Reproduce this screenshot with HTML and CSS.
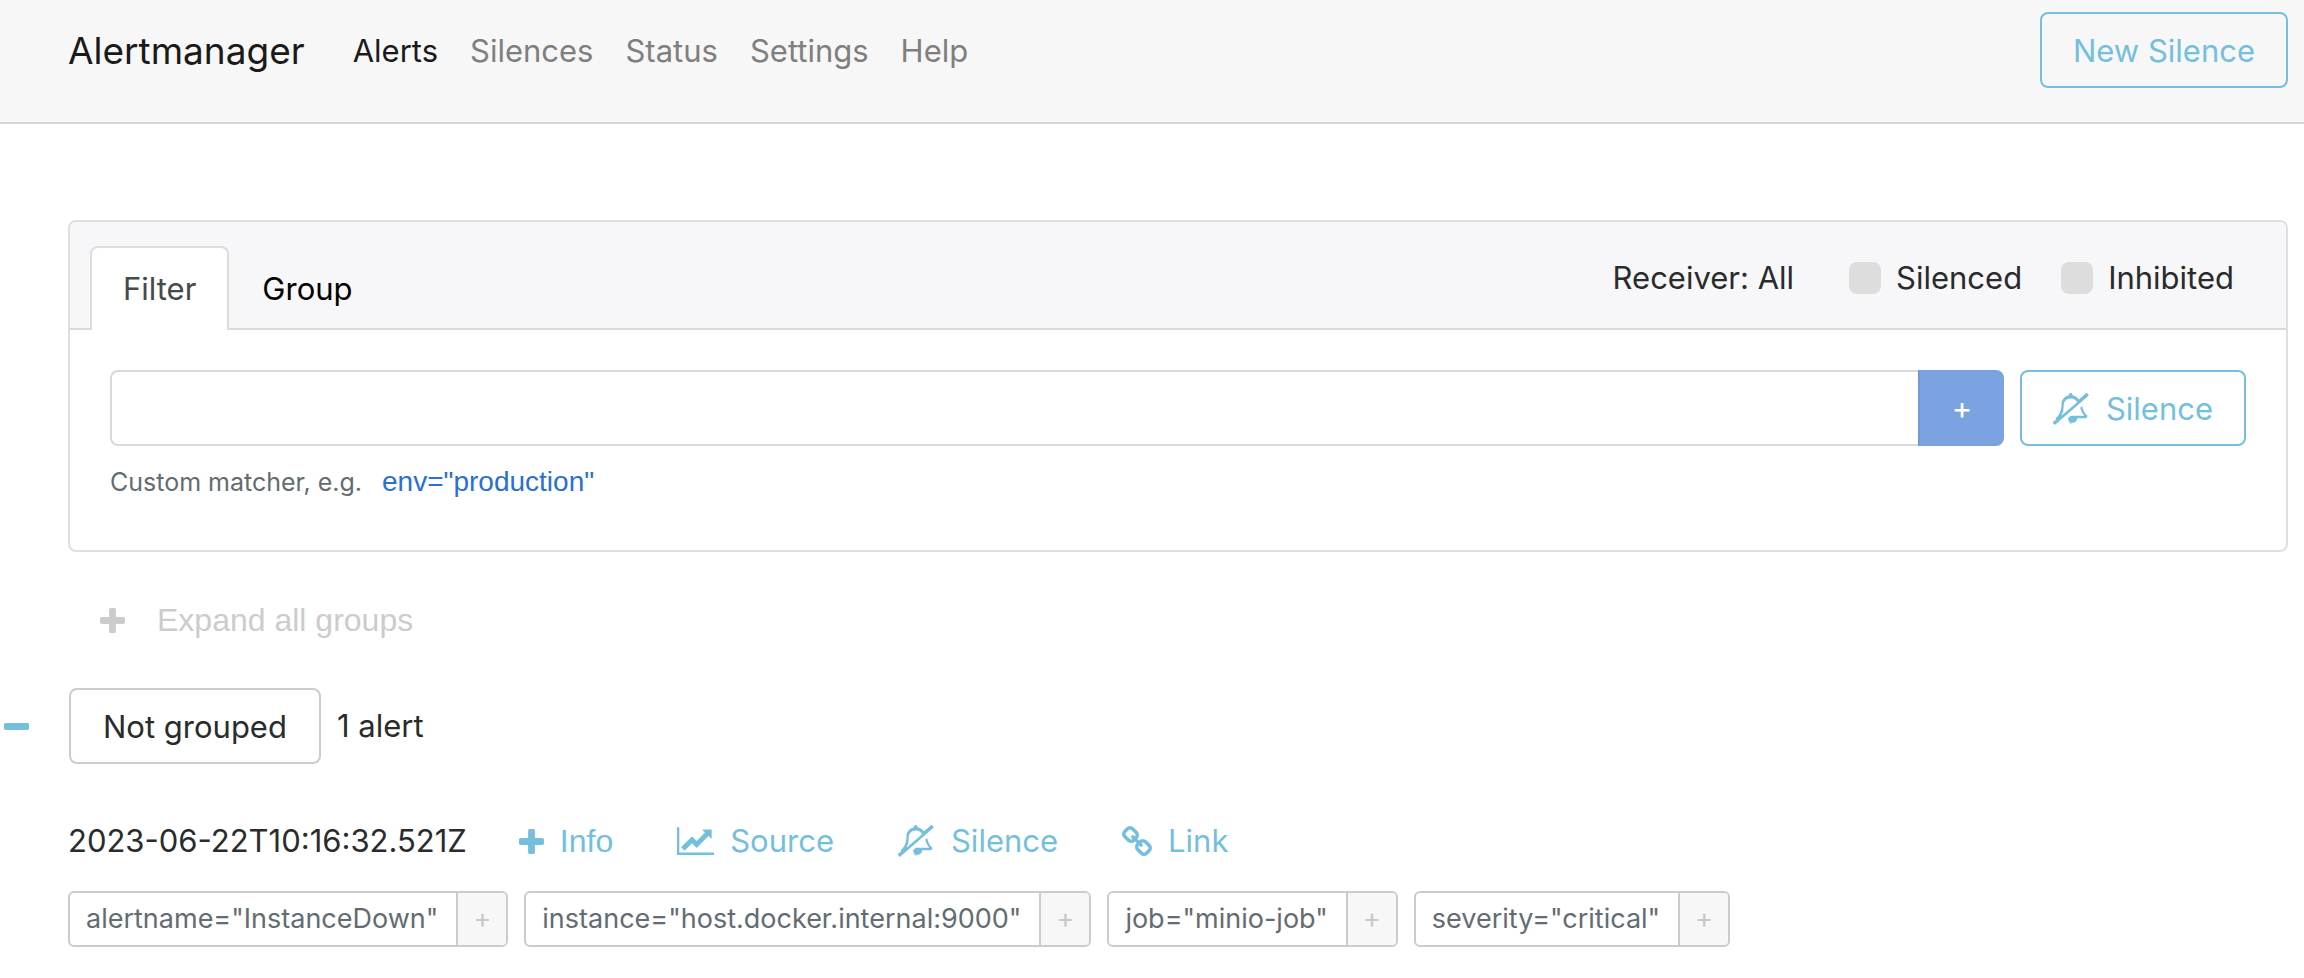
FILE: index.html
```html
<!DOCTYPE html>
<html lang="en">
<head>
<meta charset="utf-8">
<title>Alertmanager</title>
<link rel="stylesheet" href="styles.css">
</head>
<body>
<svg class="sprite" aria-hidden="true">
  <symbol id="i-plus" viewBox="0 0 1408 1408"><path d="M1408 608v192q0 40-28 68t-68 28H896v416q0 40-28 68t-68 28H608q-40 0-68-28t-28-68V896H96q-40 0-68-28T0 800V608q0-40 28-68t68-28h416V96q0-40 28-68t68-28h192q40 0 68 28t28 68v416h416q40 0 68 28t28 68z"/></symbol>
  <symbol id="i-minus" viewBox="0 0 1408 1408"><path d="M1408 608v192q0 40-28 68t-68 28H96q-40 0-68-28T0 800V608q0-40 28-68t68-28h1216q40 0 68 28t28 68z"/></symbol>
  <symbol id="i-chart" viewBox="0 0 2048 1536"><path d="M2048 1408v128H0V0h128v1408h1920zM1920 160v435q0 21-19.500 29.500T1865 617l-121-121-633 633q-10 10-23 10t-23-10l-233-233-416 416-192-192 585-585q10-10 23-10t23 10l233 233 464-464-121-121q-16-16-7.500-35.500T1453 128h435q14 0 23 9t9 23z"/></symbol>
  <symbol id="i-bell" viewBox="0 0 2048 1792"><path d="M1056 1696q0-16-16-16-59 0-101.500-42.500t-42.500-101.500q0-16-16-16t-16 16q0 73 51.500 124.500t124.500 51.500q16 0 16-16zm-595-420l877-760q-42-88-132.500-146.500t-223.500-58.500q-93 0-169.500 31.500t-121.500 80.500-69 103-24 105q0 384-137 645zm1459 4q0 52-38 90t-90 38h-448q0 106-75 181t-181 75-180.500-74.500-75.500-180.500l149-129h757q-166-187-227-459l111-97q61 356 298 556zm-22-1270l84 96q8 10 7.500 23.500t-10.500 22.500l-1872 1622q-10 8-23.500 7t-21.500-11l-84-96q-8-10-7.500-23.500t10.500-21.500l186-161q-19-32-19-66 50-42 91-88t85-119.500 74.500-158.500 50-206 19.500-260q0-152 117-282.500t307-158.500q-8-19-8-39 0-40 28-68t68-28 68 28 28 68q0 20-8 39 124 18 219 82.500t148 157.500l418-363q10-8 23.500-7t21.500 11z"/></symbol>
  <symbol id="i-link" viewBox="80 16 1632 1632"><path d="M1520 1216q0-40-28-68l-208-208q-28-28-68-28-42 0-72 32 3 3 19 18.500t21.500 21.500 15 19 13 25.500 3.500 27.500q0 40-28 68t-68 28q-15 0-27.500-3.500t-25.500-13-19-15-21.500-21.500-18.500-19q-33 31-33 73 0 40 28 68l206 207q27 27 68 27 40 0 68-26l147-146q28-28 28-67zm-703-705q0-40-28-68l-206-207q-28-28-68-28-39 0-68 27l-147 146q-28 28-28 67 0 40 28 68l208 208q27 27 68 27 42 0 72-31-3-3-19-18.500t-21.500-21.500-15-19-13-25.500-3.500-27.500q0-40 28-68t68-28q15 0 27.500 3.500t25.500 13 19 15 21.500 21.500 18.500 19q33-31 33-73zm895 705q0 120-85 203l-147 146q-83 83-203 83-121 0-204-85l-206-207q-83-83-83-203 0-123 88-209l-88-88q-86 88-208 88-120 0-204-84l-208-208q-84-84-84-204t85-203l147-146q83-83 203-83 121 0 204 85l206 207q83 83 83 203 0 123-88 209l88 88q86-88 208-88 120 0 204 84l208 208q84 84 84 204z"/></symbol>
</svg>

<header class="navbar">
  <nav class="nav">
    <a class="brand" href="#">Alertmanager</a>
    <a class="nav-link active" href="#alerts">Alerts</a>
    <a class="nav-link" href="#silences">Silences</a>
    <a class="nav-link" href="#status">Status</a>
    <a class="nav-link" href="#settings">Settings</a>
    <a class="nav-link" href="#help">Help</a>
  </nav>
  <a class="btn btn-info" href="#new">New Silence</a>
</header>

<main class="page">
  <section class="card">
    <div class="card-header">
      <div class="tabs">
        <a class="tab current" href="#filter">Filter</a>
        <a class="tab" href="#group">Group</a>
      </div>
      <div class="options">
        <button class="receiver" type="button">Receiver: All</button>
        <label class="check"><input type="checkbox"><span>Silenced</span></label>
        <label class="check"><input type="checkbox"><span>Inhibited</span></label>
      </div>
    </div>
    <div class="card-body">
      <div class="filter-row">
        <div class="input-group">
          <input class="matcher" type="text" aria-label="Matcher">
          <button class="add" type="button" disabled>+</button>
        </div>
        <a class="btn btn-info" href="#silence"><svg class="icon bell"><use href="#i-bell"/></svg>Silence</a>
      </div>
      <p class="hint">Custom matcher, e.g. <button class="example" type="button">env="production"</button></p>
    </div>
  </section>

  <button class="expand" type="button"><svg class="icon plus"><use href="#i-plus"/></svg>Expand all groups</button>

  <div class="group">
    <button class="collapse" type="button" aria-label="Collapse group"><svg class="icon plus"><use href="#i-minus"/></svg></button>
    <span class="btn btn-plain">Not grouped</span>
    <span>1 alert</span>
  </div>

  <article class="alert">
    <div class="alert-head">
      <time>2023-06-22T10:16:32.521Z</time>
      <button class="action info" type="button"><svg class="icon plus"><use href="#i-plus"/></svg>Info</button>
      <a class="action" href="#source"><svg class="icon chart"><use href="#i-chart"/></svg>Source</a>
      <a class="action" href="#silence"><svg class="icon bell"><use href="#i-bell"/></svg>Silence</a>
      <a class="action" href="#link"><svg class="icon link"><use href="#i-link"/></svg>Link</a>
    </div>
    <div class="labels">
      <div class="chip"><span class="chip-text">alertname="InstanceDown"</span><button class="chip-add" type="button">+</button></div>
      <div class="chip"><span class="chip-text">instance="host.docker.internal:9000"</span><button class="chip-add" type="button">+</button></div>
      <div class="chip"><span class="chip-text">job="minio-job"</span><button class="chip-add" type="button">+</button></div>
      <div class="chip"><span class="chip-text">severity="critical"</span><button class="chip-add" type="button">+</button></div>
    </div>
  </article>
</main>
</body>
</html>
```
FILE: styles.css
```css
* { box-sizing: border-box; }

body {
  margin: 0;
  background: #fff;
  color: #292b2c;
  font-family: Inter, "Liberation Sans", sans-serif;
  font-size: 31px;
  line-height: 48px;
}

a { text-decoration: none; }

button {
  margin: 0;
  padding: 0;
  border: 0;
  background: none;
  color: inherit;
  font: inherit;
}

.sprite { display: none; }

.icon { flex: none; fill: currentColor; }
.plus { width: 25px; height: 25px; }
.bell { width: 37px; height: 32px; }
.chart { width: 37px; height: 28px; }
.link { width: 30px; height: 30px; }

.navbar {
  display: flex;
  align-items: flex-start;
  justify-content: space-between;
  padding: 12px 16px 34px 68px;
  border-bottom: 2px solid #d5d5d5;
  background: #f7f7f7;
}

.nav {
  display: flex;
  align-items: center;
  gap: 32px;
  padding: 15px 0 13px;
}

.brand {
  margin-right: 16px;
  color: #1a1a1a;
  font-size: 37px;
}

.nav-link { color: #7f7f7f; }
.nav-link.active { color: #1a1a1a; }

.btn {
  display: inline-flex;
  align-items: center;
  gap: 16px;
  padding: 13px 32px 11px;
  border: 2px solid;
  border-radius: 8px;
  white-space: nowrap;
}

.btn-info {
  padding-right: 31px;
  padding-left: 31px;
  color: #74bfdd;
}

.btn-plain { border-color: #ccc; }

.page { padding: 96px 16px 32px 68px; }

.card {
  border: 2px solid #dfdfdf;
  border-radius: 8px;
}

.card-header {
  display: flex;
  align-items: flex-start;
  justify-content: space-between;
  padding: 24px 52px 0 20px;
  border-bottom: 2px solid #dadbdc;
  border-radius: 6px 6px 0 0;
  background: #f7f7f9;
}

.tabs {
  display: flex;
  margin-bottom: -2px;
}

.tab {
  padding: 17px 31px;
  border: 2px solid transparent;
  border-bottom: 0;
  border-radius: 8px 8px 0 0;
  color: #000;
}

.tab.current {
  border-color: #ddd;
  background: #fff;
  color: #464a4c;
}

.options {
  display: flex;
  align-items: center;
  padding-top: 8px;
}

.receiver { margin-right: 16px; }

.check {
  display: flex;
  align-items: center;
  gap: 15px;
  margin-left: 39px;
}

.check input {
  width: 32px;
  height: 32px;
  margin: 0;
  border-radius: 8px;
  background: #ddd;
  appearance: none;
}

.card-body { padding: 40px; }

.filter-row {
  display: flex;
  gap: 16px;
}

.input-group {
  display: flex;
  flex: 1;
}

.matcher {
  flex: 1;
  min-width: 0;
  padding: 0 24px;
  border: 2px solid #d9d9d9;
  border-right: 0;
  border-radius: 8px 0 0 8px;
  font: inherit;
}

.add {
  width: 86px;
  border-left: 2px solid #6f99dc;
  border-radius: 0 8px 8px 0;
  background: #7ba2e1;
  color: #fff;
}

.hint {
  display: flex;
  align-items: baseline;
  gap: 20px;
  margin: 0;
  padding: 12px 0 4px;
  color: #636c72;
  font-size: 25px;
}

.example {
  color: #2a6fd2;
  font-family: "Liberation Sans", Arial, sans-serif;
  font-size: 28px;
}

.expand {
  display: flex;
  align-items: center;
  gap: 32px;
  padding: 44px 32px;
  color: #ccc;
  font-family: "Liberation Sans", Arial, sans-serif;
  font-size: 32px;
}

.group {
  display: flex;
  align-items: center;
  gap: 16px;
  margin-left: -64px;
}

.collapse {
  display: flex;
  margin-right: 24px;
  color: #74bfdd;
}

.alert { padding-top: 53px; }

.alert-head {
  display: flex;
  align-items: center;
  gap: 64px;
}

.action {
  display: flex;
  align-items: center;
  gap: 16px;
  color: #74bfdd;
}

.info {
  margin-left: -12px;
  font-family: "Liberation Sans", Arial, sans-serif;
  font-size: 32px;
}

.labels {
  display: flex;
  flex-wrap: wrap;
  gap: 16px;
  padding-top: 26px;
}

.chip {
  display: flex;
  overflow: hidden;
  border: 2px solid #ccc;
  border-radius: 6px;
  font-size: 27px;
}

.chip-text {
  padding: 2px 18px 2px 16px;
  color: #636c72;
}

.chip-add {
  width: 50px;
  border-left: 2px solid #ccc;
  background: #f7f7f7;
  color: #c8c8c8;
}
```
